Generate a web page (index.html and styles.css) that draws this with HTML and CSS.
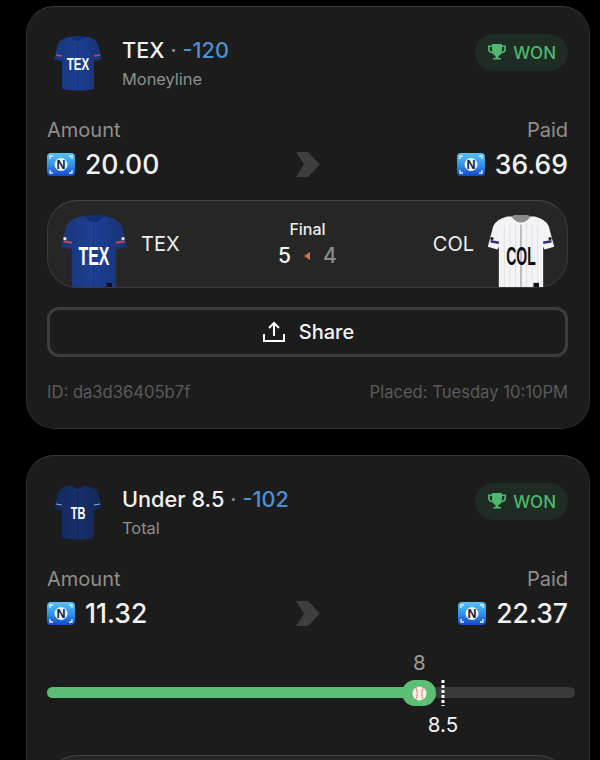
FILE: index.html
```html
<!DOCTYPE html>
<html lang="en">
	<head>
		<meta charset="UTF-8" />
		<meta name="viewport" content="width=device-width, initial-scale=1.0" />
		<title>My Bets</title>
		<link rel="stylesheet" href="styles.css">
	</head>
	<body>
		<svg class="svg-defs" width="0" height="0" aria-hidden="true">
			<defs>
				<linearGradient id="coin-fill" x1="0" y1="0" x2="0" y2="1">
					<stop offset="0" stop-color="#5cc0f5" />
					<stop offset="0.55" stop-color="#2f8fe8" />
					<stop offset="1" stop-color="#1646c8" />
				</linearGradient>
				<linearGradient id="tex-fill" x1="0" y1="0" x2="1" y2="0">
					<stop offset="0" stop-color="#1a3578" />
					<stop offset="0.5" stop-color="#1d4094" />
					<stop offset="1" stop-color="#183273" />
				</linearGradient>
				<linearGradient id="tb-fill" x1="0" y1="0" x2="1" y2="0">
					<stop offset="0" stop-color="#13295c" />
					<stop offset="0.5" stop-color="#17306c" />
					<stop offset="1" stop-color="#122756" />
				</linearGradient>
			</defs>
		</svg>

		<section class="bet-card">
			<div class="bet-header">
				<svg class="jersey-small" viewBox="0 0 48 55">
					<path fill="url(#tex-fill)" d="M14 1L19 1Q24 7 29 1L34 1Q42 3 44 8L48 23L41 25L40 23L40 53Q24 56 8 53L8 23L7 25L0 23L4 8Q6 3 14 1Z" />
					<path fill="#12306f" d="M17 1Q24 9 31 1L29 0L19 0Z" />
					<path stroke="#c9475a" stroke-width="1.400" d="M2 19L8 20M46 19L40 20" />
					<path stroke="#14306f" stroke-width="0.700" d="M24 6V54" />
					<text class="jersey-text" font-size="17" fill="#fff" transform="translate(24 34) scale(0.680 1)">TEX</text>
				</svg>
				<div class="bet-title-block">
					<div class="bet-title">TEX <span class="dot">·</span> <span class="odds">-120</span></div>
					<div class="bet-type">Moneyline</div>
				</div>
				<div class="won-badge">
					<svg class="trophy" viewBox="0 0 20 20"><path fill="#4fb76f" d="M5 1h10v1.500h4V6c0 2.600-1.800 4.300-4.700 4.600-.7 1.200-1.600 2-2.800 2.300V15h2.500v1.500h-7.900V15H8.500v-2.100c-1.200-.3-2.100-1.100-2.800-2.300C2.800 10.300 1 8.600 1 6V2.500h4zM2.700 4v2c0 1.500.9 2.500 2.500 2.800-.2-1.200-.2-2.900-.2-4.800zm14.600 0H15c0 1.900 0 3.600-.2 4.800 1.600-.3 2.500-1.300 2.500-2.800z" /></svg>
					<span>WON</span>
				</div>
			</div>

			<div class="stake-row">
				<div class="stake-col">
					<div class="stake-label">Amount</div>
					<div class="stake-value">
						<svg class="coin" viewBox="0 0 28 23">
							<rect width="28" height="23" rx="4" fill="url(#coin-fill)" />
							<circle cx="14" cy="11.500" r="6.500" fill="#f1f3f6" />
							<path stroke="#dff1ff" stroke-width="1.300" fill="none" d="M3 6V3H6M22 3H25V6M3 17V20H6M22 20H25V17" />
							<text class="coin-text" x="14" y="16" font-size="12.500">N</text>
						</svg>
						<span>20.00</span>
					</div>
				</div>
				<svg class="stake-arrow" viewBox="0 0 24 25"><path fill="#3e3e3e" d="M0 0H12L24 12.500L12 25H0L8 12.500Z" /></svg>
				<div class="stake-col stake-col-right">
					<div class="stake-label">Paid</div>
					<div class="stake-value">
						<svg class="coin" viewBox="0 0 28 23">
							<rect width="28" height="23" rx="4" fill="url(#coin-fill)" />
							<circle cx="14" cy="11.500" r="6.500" fill="#f1f3f6" />
							<path stroke="#dff1ff" stroke-width="1.300" fill="none" d="M3 6V3H6M22 3H25V6M3 17V20H6M22 20H25V17" />
							<text class="coin-text" x="14" y="16" font-size="12.500">N</text>
						</svg>
						<span>36.69</span>
					</div>
				</div>
			</div>

			<div class="game-box">
				<div class="game-team">
					<svg class="jersey-big" viewBox="0 0 48 52">
						<path fill="url(#tex-fill)" d="M14 1L19 1Q24 7 29 1L34 1Q42 3 44 8L48 23L41 25L40 23L40 56H8L8 23L7 25L0 23L4 8Q6 3 14 1Z" />
						<path fill="#12306f" d="M17 1Q24 9 31 1L29 0L19 0Z" />
						<path stroke="#c9475a" stroke-width="1.400" d="M2 19L8 20M46 19L40 20" />
						<circle cx="3" cy="17" r="1.200" fill="#e8e8ee" />
						<circle cx="45" cy="17" r="1.200" fill="#e8e8ee" />
						<path stroke="#14306f" stroke-width="0.500" d="M24 6V52" />
						<rect x="33" y="49" width="4" height="3" fill="#101018" />
						<text class="jersey-text" font-size="18" fill="#fff" transform="translate(24 36) scale(0.640 1)">TEX</text>
					</svg>
					<span class="team-name">TEX</span>
				</div>
				<div class="game-score">
					<div class="game-status">Final</div>
					<div class="game-runs">
						<span>5</span>
						<i class="winner-arrow"></i>
						<span class="runs-lost">4</span>
					</div>
				</div>
				<div class="game-team">
					<span class="team-name">COL</span>
					<svg class="jersey-big" viewBox="0 0 48 52">
						<path fill="#f4f4f6" d="M14 1L19 1Q24 7 29 1L34 1Q42 3 44 8L48 23L41 25L40 23L40 56H8L8 23L7 25L0 23L4 8Q6 3 14 1Z" />
						<path fill="#8b8b8e" d="M17 1Q24 10 31 1L29 0L19 0Z" />
						<path stroke="#c9c9d2" stroke-width="0.300" d="M12 8V52M16 6V52M20 6V52M28 6V52M32 6V52M36 8V52" />
						<path stroke="#3c2a80" stroke-width="1.800" d="M2 19L8 20M46 19L40 20" />
						<circle cx="3" cy="17" r="1.200" fill="#25252a" />
						<circle cx="45" cy="17" r="1.200" fill="#25252a" />
						<path stroke="#55555a" stroke-width="0.500" d="M24 7V52" />
						<rect x="33" y="49" width="4" height="3" fill="#101018" />
						<text class="jersey-text" font-size="18" fill="#0c0c0c" transform="translate(24 36) scale(0.560 1)">COL</text>
					</svg>
				</div>
			</div>

			<button class="share-button" type="button">
				<svg class="share-icon" viewBox="0 0 22 22"><path fill="none" stroke="#fff" stroke-width="2" d="M1 13V20H21V13M11 15V2M6 7L11 2L16 7" /></svg>
				<span>Share</span>
			</button>

			<div class="bet-footer">
				<span>ID: da3d36405b7f</span>
				<span>Placed: Tuesday 10:10PM</span>
			</div>
		</section>

		<section class="bet-card">
			<div class="bet-header">
				<svg class="jersey-small" viewBox="0 0 48 55">
					<path fill="url(#tb-fill)" d="M14 1L19 1Q24 7 29 1L34 1Q42 3 44 8L48 23L41 25L40 23L40 53Q24 56 8 53L8 23L7 25L0 23L4 8Q6 3 14 1Z" />
					<path stroke="#8fa8d0" stroke-width="1.200" d="M2 19L8 20M46 19L40 20" />
					<path stroke="#0f2148" stroke-width="0.700" d="M24 6V54" />
					<text class="jersey-text" font-size="17" fill="#fff" transform="translate(24 34) scale(0.650 1)">TB</text>
				</svg>
				<div class="bet-title-block">
					<div class="bet-title">Under 8.5 <span class="dot">·</span> <span class="odds">-102</span></div>
					<div class="bet-type">Total</div>
				</div>
				<div class="won-badge">
					<svg class="trophy" viewBox="0 0 20 20"><path fill="#4fb76f" d="M5 1h10v1.500h4V6c0 2.600-1.800 4.300-4.700 4.600-.7 1.200-1.600 2-2.800 2.300V15h2.500v1.500h-7.900V15H8.500v-2.100c-1.200-.3-2.100-1.100-2.800-2.300C2.800 10.300 1 8.600 1 6V2.500h4zM2.700 4v2c0 1.500.9 2.500 2.500 2.800-.2-1.200-.2-2.900-.2-4.800zm14.600 0H15c0 1.900 0 3.600-.2 4.800 1.600-.3 2.500-1.300 2.500-2.800z" /></svg>
					<span>WON</span>
				</div>
			</div>

			<div class="stake-row">
				<div class="stake-col">
					<div class="stake-label">Amount</div>
					<div class="stake-value">
						<svg class="coin" viewBox="0 0 28 23">
							<rect width="28" height="23" rx="4" fill="url(#coin-fill)" />
							<circle cx="14" cy="11.500" r="6.500" fill="#f1f3f6" />
							<path stroke="#dff1ff" stroke-width="1.300" fill="none" d="M3 6V3H6M22 3H25V6M3 17V20H6M22 20H25V17" />
							<text class="coin-text" x="14" y="16" font-size="12.500">N</text>
						</svg>
						<span>11.32</span>
					</div>
				</div>
				<svg class="stake-arrow" viewBox="0 0 24 25"><path fill="#3e3e3e" d="M0 0H12L24 12.500L12 25H0L8 12.500Z" /></svg>
				<div class="stake-col stake-col-right">
					<div class="stake-label">Paid</div>
					<div class="stake-value">
						<svg class="coin" viewBox="0 0 28 23">
							<rect width="28" height="23" rx="4" fill="url(#coin-fill)" />
							<circle cx="14" cy="11.500" r="6.500" fill="#f1f3f6" />
							<path stroke="#dff1ff" stroke-width="1.300" fill="none" d="M3 6V3H6M22 3H25V6M3 17V20H6M22 20H25V17" />
							<text class="coin-text" x="14" y="16" font-size="12.500">N</text>
						</svg>
						<span>22.37</span>
					</div>
				</div>
			</div>

			<div class="total-slider">
				<div class="slider-track">
					<div class="slider-fill" style="width: 69%"></div>
				</div>
				<div class="slider-current" style="left: 70.500%">8</div>
				<div class="slider-thumb" style="left: 70.500%">
					<svg class="baseball" viewBox="0 0 16 16">
						<circle cx="8" cy="8" r="7.500" fill="#f5f0ea" />
						<path fill="none" stroke="#c8452f" stroke-width="1.100" stroke-dasharray="1.300 0.800" d="M4 1.500Q7 8 4 14.500M12 1.500Q9 8 12 14.500" />
					</svg>
				</div>
				<div class="slider-line" style="left: 75%"></div>
				<div class="slider-target" style="left: 75%">8.5</div>
			</div>

			<div class="game-box"></div>
		</section>
	</body>
</html>
```

FILE: styles.css
```css
* {
	box-sizing: border-box;
}

html,
body {
	height: 760px;
	overflow: hidden;
}

body {
	margin: 0;
	padding: 6px 10px 0 26px;
	background-color: #000;
	color: #f2f2f2;
	font-family: Inter, "Liberation Sans", sans-serif;
}

.svg-defs {
	position: absolute;
}

.bet-card {
	padding: 29px 21px 26px 20px;
	margin-bottom: 26px;
	border: 1px solid #2c2c2c;
	border-top-color: #3a3a3a;
	border-radius: 28px;
	background-color: #1c1c1c;
}

.bet-header {
	display: flex;
	align-items: flex-start;
	height: 56px;
}

.jersey-small {
	width: 48px;
	height: 55px;
	margin-left: 7px;
	flex-shrink: 0;
}

.jersey-text {
	font-family: "Liberation Sans", sans-serif;
	font-weight: 700;
	text-anchor: middle;
}

.bet-title-block {
	margin-left: 20px;
	flex: 1;
}

.bet-title {
	font-size: 21.700px;
	line-height: 28px;
	font-weight: 500;
}

.dot {
	color: #8a8a8a;
}

.odds {
	color: #4a90d2;
}

.bet-type {
	margin-top: 4px;
	font-size: 16.400px;
	line-height: 22px;
	color: #8f8f8f;
}

.won-badge {
	display: flex;
	align-items: center;
	gap: 6px;
	height: 37px;
	padding: 0 12px;
	margin-top: -2px;
	border-radius: 19px;
	background-color: #1e2c23;
	color: #4fb76f;
	font-size: 17px;
	font-weight: 500;
}

.trophy {
	width: 20px;
	height: 20px;
}

.stake-row {
	display: flex;
	justify-content: space-between;
	align-items: flex-end;
	margin-top: 26px;
}

.stake-col {
	width: 200px;
}

.stake-col-right {
	text-align: right;
}

.stake-label {
	font-size: 20px;
	line-height: 24px;
	color: #8f8f8f;
}

.stake-value {
	display: flex;
	align-items: center;
	gap: 10px;
	margin-top: 6px;
	font-size: 26.500px;
	line-height: 32px;
	font-weight: 500;
	color: #f2f2f2;
}

.stake-col-right .stake-value {
	justify-content: flex-end;
}

.coin {
	width: 28px;
	height: 23px;
	flex-shrink: 0;
}

.coin-text {
	font-family: "Liberation Sans", sans-serif;
	font-weight: 700;
	text-anchor: middle;
	fill: #17233a;
}

.stake-arrow {
	width: 24px;
	height: 25px;
	margin-bottom: 3px;
}

.game-box {
	display: flex;
	align-items: flex-end;
	justify-content: space-between;
	height: 88px;
	margin-top: 20px;
	padding: 0 12px;
	border: 1px solid #3a3a3a;
	border-top-color: #444;
	border-radius: 30px;
	background-color: #262626;
	position: relative;
}

.game-team {
	display: flex;
	align-items: flex-end;
	gap: 13px;
	font-size: 20px;
	color: #efefef;
}

.team-name {
	margin-bottom: 31px;
}

.jersey-big {
	display: block;
	width: 68px;
	height: 72px;
}

.game-score {
	text-align: center;
	position: absolute;
	left: 0;
	right: 0;
	top: 17px;
}

.game-status {
	font-size: 16px;
	line-height: 22px;
	font-weight: 500;
	color: #eee;
}

.game-runs {
	display: flex;
	justify-content: center;
	align-items: center;
	gap: 13px;
	margin-top: 3px;
	font-size: 21px;
	line-height: 26px;
	font-weight: 500;
}

.runs-lost {
	color: #8a8a8a;
}

.winner-arrow {
	width: 0;
	height: 0;
	border-top: 4px solid transparent;
	border-bottom: 4px solid transparent;
	border-right: 6px solid #d9703a;
}

.share-button {
	display: flex;
	align-items: center;
	justify-content: center;
	gap: 14px;
	width: 100%;
	height: 50px;
	margin-top: 19px;
	padding-left: 8px;
	border: 3px solid #3c3c3c;
	border-radius: 12px;
	background-color: transparent;
	color: #f5f5f5;
	font-family: inherit;
	font-size: 20px;
	font-weight: 500;
}

.share-icon {
	width: 22px;
	height: 22px;
}

.bet-footer {
	display: flex;
	justify-content: space-between;
	margin-top: 25px;
	font-size: 16.600px;
	line-height: 20px;
	color: #5a5a5a;
}

.total-slider {
	position: relative;
	height: 82px;
	margin-top: 24px;
	margin-right: -7px;
}

.slider-track {
	position: absolute;
	top: 34px;
	left: 0;
	right: 0;
	height: 11px;
	border-radius: 6px;
	background-color: #3a3a3a;
}

.slider-fill {
	height: 100%;
	border-radius: 6px 0 0 6px;
	background-color: #5cbf75;
}

.slider-current,
.slider-target {
	position: absolute;
	transform: translateX(-50%);
	font-size: 20.500px;
	line-height: 20px;
}

.slider-current {
	top: 0;
	color: #9a9a9a;
}

.slider-target {
	top: 62px;
	color: #f2f2f2;
}

.slider-thumb {
	position: absolute;
	top: 27px;
	display: flex;
	align-items: center;
	justify-content: center;
	width: 34px;
	height: 26px;
	transform: translateX(-50%);
	border-radius: 13px;
	background-color: #5cbf75;
}

.baseball {
	width: 15px;
	height: 15px;
}

.slider-line {
	position: absolute;
	top: 27px;
	height: 26px;
	width: 3px;
	transform: translateX(-50%);
	background-image: repeating-linear-gradient(#fff 0 3px, transparent 3px 5px);
}
```
